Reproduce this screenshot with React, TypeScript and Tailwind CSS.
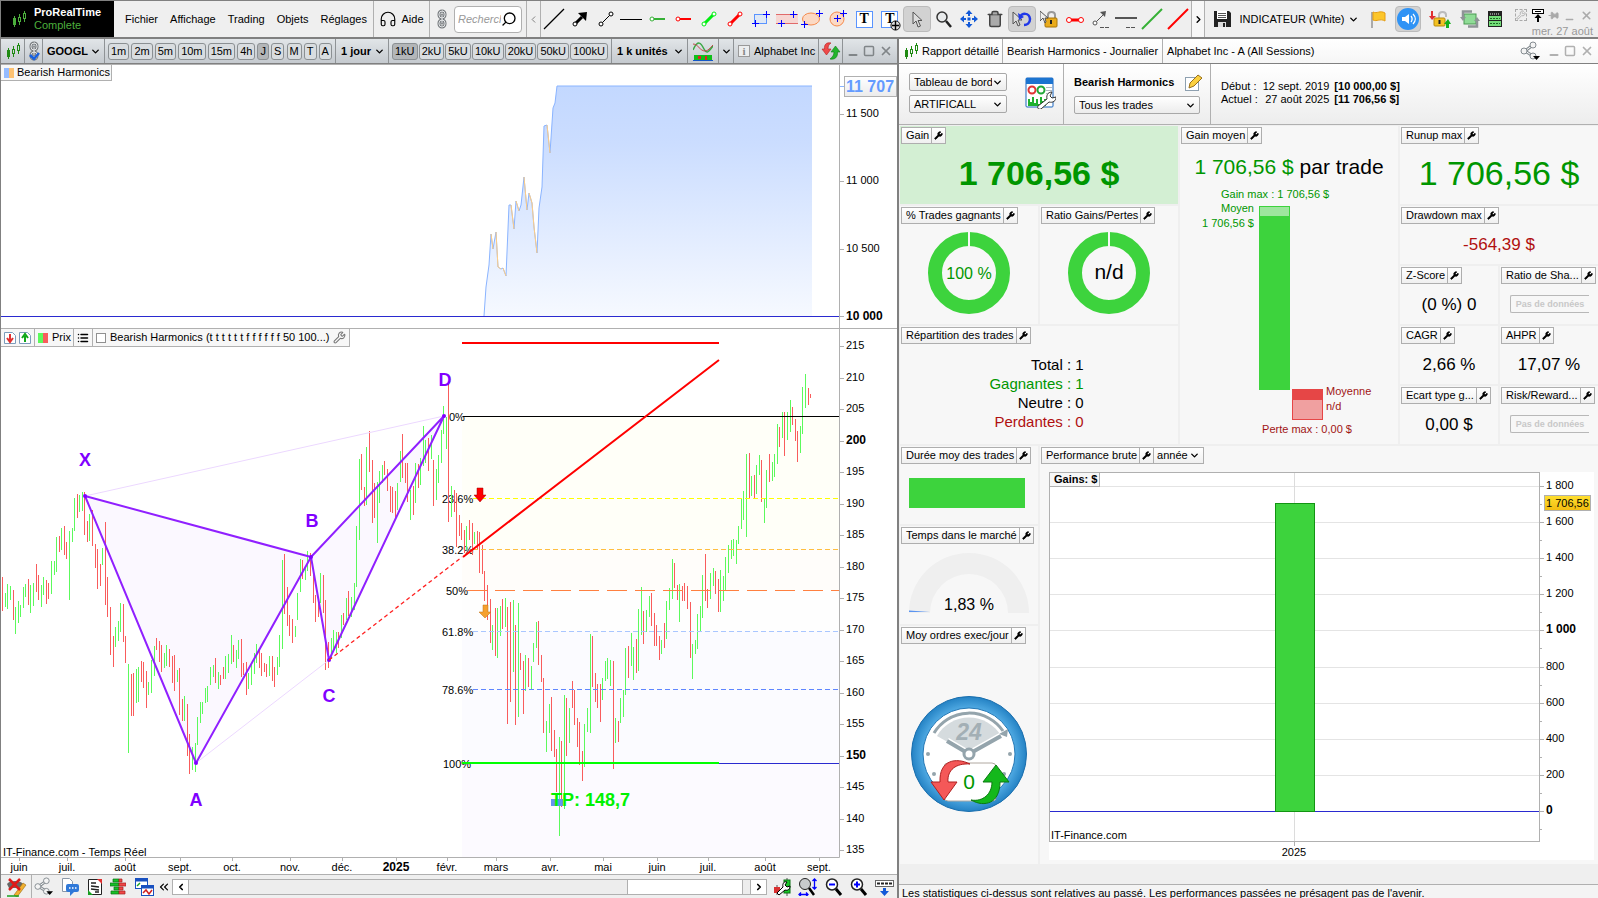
import React from 'react'
import {
  ChevronDown, ChevronLeft, ChevronRight, ChevronsLeft, Headphones, List, Minus, Pin, Search, Square, Trash2, Wrench, X,
} from 'lucide-react'

// x,high,low of each session, split by direction
const risingBars = `5,593,607 7,584,609 10,586,600 15,607,634 18,601,623 20,605,617 23,587,608 25,584,597 30,585,613 33,583,606
41,585,607 43,577,595 51,561,594 54,561,575 56,537,572 61,528,550 69,531,600 72,528,542 74,498,531 79,495,512 82,492,511 89,514,541
102,548,565 115,627,647 118,621,641 120,603,632 128,664,753 136,669,703 138,667,702 148,682,695 151,660,693 154,646,676 164,653,668
166,645,666 177,670,682 184,696,721 192,747,770 195,743,772 197,717,745 200,702,723 202,702,714 205,688,703 207,686,702 210,667,685
213,665,677 218,672,689 225,656,679 228,654,673 231,635,664 236,650,668 238,640,659 248,673,689 251,663,685 254,653,674 256,644,663
269,656,676 277,657,675 279,635,667 282,560,649 295,626,637 297,593,620 300,559,592 305,567,580 307,551,571 320,573,603 331,638,659
333,630,650 336,632,653 341,615,638 346,598,620 351,597,617 354,583,610 356,526,587 359,459,540 366,447,505 377,482,543 379,471,503
382,465,483 397,483,510 400,451,482 410,490,520 415,463,503 420,458,485 423,426,466 425,440,463 431,435,459 436,469,500 438,455,483
441,430,463 443,406,434 446,417,449 451,486,517 466,526,550 474,532,544 492,625,650 497,608,658 500,606,636 505,598,627 513,600,672
518,603,717 525,655,691 531,666,690 533,643,662 536,622,648 546,721,752 549,704,733 559,737,836 564,695,809 569,708,743 584,724,767
587,708,732 590,634,733 602,678,700 605,661,681 607,658,679 610,660,686 615,718,743 620,698,723 623,690,717 625,648,695 631,633,666
633,647,680 638,609,671 641,587,635 646,610,632 649,596,617 661,640,654 666,601,639 669,588,610 672,559,599 679,584,622 692,644,679
695,640,654 697,614,649 700,606,631 702,575,618 710,573,599 713,568,586 720,570,612 723,576,601 725,557,591 728,545,573 731,540,559
733,539,556 736,540,564 738,526,544 741,499,529 743,491,520 746,454,537 751,476,496 756,465,494 759,455,475 764,498,523 766,470,508
772,462,481 774,454,477 777,424,464 782,412,438 787,412,440 790,400,432 800,426,453 802,387,434 805,374,408`

const fallingBars = `2,577,611 13,590,620 28,579,605 36,564,592 38,575,600 46,580,604 48,583,599 59,536,552 64,526,555 66,542,559 77,494,518
84,492,535 87,521,542 92,510,546 95,544,568 97,549,589 100,564,586 105,522,605 107,577,617 110,607,655 113,636,667 123,604,642
125,636,663 131,674,716 133,673,716 141,661,682 143,662,688 146,671,708 156,638,650 159,641,662 161,645,672 169,649,667 172,656,683
174,655,691 179,668,715 182,699,721 187,704,756 189,734,774 215,658,683 220,675,685 223,667,679 233,645,662 241,639,677 243,663,675
246,662,695 259,650,668 261,653,676 264,663,672 266,664,677 272,656,681 274,667,687 284,554,614 287,587,626 289,615,636 292,619,643
302,560,579 310,553,576 313,570,603 315,595,622 318,600,617 323,575,613 325,600,670 328,642,668 338,632,648 343,613,625 348,591,616
361,454,490 364,487,506 369,431,472 372,460,523 374,483,518 384,461,475 387,469,491 390,486,512 392,487,513 395,491,520 402,434,478
405,463,483 407,463,502 413,486,515 418,464,488 428,438,471 433,460,506 448,382,522 454,490,512 456,493,547 459,515,536 461,523,540
464,530,553 469,520,540 472,523,555 477,531,550 479,532,573 482,545,574 484,571,601 487,585,620 490,599,643 495,608,656 502,599,629
507,607,724 510,602,702 515,625,725 520,653,670 523,661,714 528,658,687 538,621,665 541,655,682 543,678,733 551,697,751 554,730,757
556,749,792 561,741,807 566,698,756 572,681,708 574,690,725 577,718,747 579,722,765 582,751,781 592,636,687 595,673,702 597,684,708
600,684,722 613,661,769 618,721,742 628,646,678 636,639,673 643,611,644 651,593,626 654,613,646 656,625,646 659,636,660 664,623,648
674,563,588 677,585,600 682,586,601 684,583,601 687,586,609 690,602,658 705,554,601 707,589,608 715,571,594 718,579,612 749,453,498
754,475,499 761,460,502 769,454,482 779,427,447 784,412,456 792,407,425 795,419,441 797,431,462 808,388,405 810,394,398`

const toPath = (bars: string) =>
  bars
    .split(/\s+/)
    .map((bar) => bar.split(','))
    .map(([x, high, low]) => `M${Number(x) + 0.5} ${high}V${low}`)
    .join('')

const equity = [
  [484, 316], [486, 287], [489, 265], [491, 234], [493, 249], [496, 232], [498, 267], [501, 269], [503, 268], [506, 276],
  [509, 205], [511, 205], [514, 229], [516, 201], [519, 211], [521, 205], [524, 177], [527, 210], [529, 193], [532, 203],
  [534, 227], [537, 253], [539, 208], [542, 187], [544, 126], [547, 125], [550, 153], [553, 108], [555, 103], [557, 86], [812, 86],
]

const prices = [215, 210, 205, 200, 195, 190, 185, 180, 175, 170, 165, 160, 155, 150, 145, 140, 135]

const months: [string, number][] = [
  ['juin', 19], ['juil.', 67], ['août', 125], ['sept.', 180], ['oct.', 232], ['nov.', 290], ['déc.', 342], ['2025', 396],
  ['févr.', 447], ['mars', 496], ['avr.', 550], ['mai', 603], ['juin', 657], ['juil.', 708], ['août', 765], ['sept.', 819],
]

const fibLevels = [
  { label: '0%', x: 449, y: 416, from: 463, color: '#000000', dash: '' },
  { label: '23.6%', x: 442, y: 498, from: 473, color: '#ffff00', dash: '5 3' },
  { label: '38.2%', x: 442, y: 549, from: 473, color: '#ffbf40', dash: '5 3' },
  { label: '50%', x: 446, y: 590, from: 467, color: '#ff8040', dash: '20 8' },
  { label: '61.8%', x: 442, y: 631, from: 473, color: '#a9c6ff', dash: '5 3' },
  { label: '78.6%', x: 442, y: 689, from: 473, color: '#5f86ff', dash: '5 3' },
  { label: '100%', x: 443, y: 763, from: 463, color: '#2a2ad0', dash: '' },
]

const patternLabels: [string, number, number][] = [
  ['X', 85, 466], ['A', 196, 806], ['B', 312, 527], ['C', 329, 702], ['D', 445, 386],
]

function Icon({ w = 18, h = 18, children }: { w?: number; h?: number; children: React.ReactNode }) {
  return (
    <svg width={w} height={h} viewBox={`0 0 ${w} ${h}`} fill="none" className="shrink-0" aria-hidden="true">
      {children}
    </svg>
  )
}

function CandlesIcon({ color = '#1f8a12' }: { color?: string }) {
  return (
    <Icon w={14} h={16}>
      <path d="M2.500 5v11M7.500 3v3M7.500 11v3M12.500 0v2M12.500 8v3" stroke={color} />
      <rect x="1" y="7" width="3" height="7" fill={color} />
      <rect x="6.500" y="6.500" width="2" height="4" stroke={color} />
      <rect x="11.500" y="2.500" width="2" height="5" stroke={color} />
    </Icon>
  )
}

function ChainIcon({ checked }: { checked?: boolean }) {
  return (
    <Icon w={12} h={20}>
      <g strokeLinecap="round" stroke="#777b7e" strokeWidth="3">
        <rect x="3" y="2" width="6" height="7" rx="3" />
        <rect x="3" y="11" width="6" height="7" rx="3" />
        <path d="M6 6v8" />
      </g>
      <g strokeLinecap="round" stroke="#e4e6e8" strokeWidth="1">
        <rect x="3" y="2" width="6" height="7" rx="3" />
        <rect x="3" y="11" width="6" height="7" rx="3" />
        <path d="M6 6v8" />
      </g>
      {checked && <path d="M2 14l4 4 5-6" stroke="#1860e0" strokeWidth="2.500" />}
    </Icon>
  )
}

function SwapIcon() {
  return (
    <Icon w={20} h={18}>
      <path d="M10 1C5 0 3 3 3.500 7H1l4.500 6L10 7H7c0-3 1-5 3-6z" fill="#ee4a4a" stroke="#b31e1e" strokeWidth=".6" />
      <path d="M9 17c5 1 8-2 7.500-7H19l-4.500-6L10 10h3c0 3-1.500 5-4 7z" fill="#22b52c" stroke="#0d7a14" strokeWidth=".6" />
    </Icon>
  )
}

function ShareIcon({ size = 20 }: { size?: number }) {
  return (
    <svg width={size} height={size} viewBox="0 0 20 20" fill="none" className="shrink-0" aria-hidden="true">
      <path d="M5 10l8-6M5 10l8 5" stroke="#858c91" strokeWidth="3" />
      <path d="M5 10l8-6M5 10l8 5" stroke="#fff" />
      <circle cx="4" cy="10" r="3" fill="#f4f4f4" stroke="#858c91" />
      <circle cx="13" cy="4" r="3" fill="#f4f4f4" stroke="#858c91" />
      <circle cx="13" cy="15" r="3" fill="#f4f4f4" stroke="#858c91" />
      <path d="M13 15h7l-3.500 4z" fill="#000" />
    </svg>
  )
}

function Segment({ color, thick }: { color: string; thick?: boolean }) {
  return (
    <Icon w={16} h={16}>
      <path d="M3 13L13 3" stroke={color} strokeWidth={thick ? 3 : 1} />
      <circle cx="3" cy="13" r="2" fill="#fff" stroke={color} />
      <circle cx="13" cy="3" r="2" fill="#fff" stroke={color} />
    </Icon>
  )
}

const plus = (x: number, y: number) => `M${x - 3} ${y + 0.5}h7M${x + 0.5} ${y - 3}v7`

const drawingTools: { name: string; active?: boolean; icon: React.ReactNode }[] = [
  { name: 'Droite', icon: <Icon w={22} h={22}><path d="M1 21L21 1" stroke="#000" strokeWidth="1.300" /></Icon> },
  { name: 'Flèche', icon: <Icon w={16} h={16}><path d="M3 13l7-7" stroke="#000" strokeWidth="3" /><path d="M6 2l9-1-1 9z" fill="#000" /><circle cx="3" cy="13" r="2" fill="#fff" stroke="#000" /></Icon> },
  { name: 'Segment', icon: <Segment color="#000" /> },
  { name: 'Horizontale', icon: <Icon w={22}><path d="M0 9.500h22" stroke="#000" /></Icon> },
  { name: 'Demi-droite haussière', icon: <Icon w={16}><path d="M4 9h12" stroke="#35b035" strokeWidth="2" /><circle cx="3" cy="9" r="2" fill="#fff" stroke="#35b035" /></Icon> },
  { name: 'Demi-droite baissière', icon: <Icon w={16}><path d="M4 9h12" stroke="#f00" strokeWidth="2" /><circle cx="3" cy="9" r="2" fill="#fff" stroke="#f00" /></Icon> },
  { name: 'Segment haussier', icon: <Segment color="#0e1" thick /> },
  { name: 'Segment baissier', icon: <Segment color="#f00" thick /> },
  { name: 'Rectangle', icon: <Icon><rect x="2.500" y="4.500" width="12" height="9" fill="#dfe8f5" stroke="#5a94ff" /><path d={plus(14, 4) + plus(3, 13)} stroke="#00f" /></Icon> },
  { name: 'Canal', icon: <Icon w={22}><rect y="4" width="22" height="10" fill="#f6d6d2" /><path d="M0 4.500h22M0 13.500h22" stroke="#e06a6a" /><path d={plus(17, 4) + plus(5, 13)} stroke="#00f" /></Icon> },
  { name: 'Ellipse', icon: <Icon w={22}><ellipse cx="10" cy="9" rx="8.500" ry="6" fill="#fbd9c4" stroke="#f58a4c" /><path d={plus(18, 3) + plus(3, 14)} stroke="#00f" /></Icon> },
  { name: 'Cercle', icon: <Icon><circle cx="8" cy="9" r="7" fill="#fbd9c4" stroke="#f58a4c" /><path d={plus(8, 8) + plus(14, 3)} stroke="#00f" /></Icon> },
  { name: 'Texte', icon: <span className="flex h-[17px] w-[17px] items-center justify-center border border-[#5a94ff] bg-white font-['Liberation_Serif',serif] text-sm font-bold">T</span> },
  { name: 'Texte ancré', icon: <span className="relative flex h-[17px] w-[17px] items-center justify-center border border-[#5a94ff] bg-white font-['Liberation_Serif',serif] text-sm font-bold">T<svg viewBox="0 0 12 12" className="absolute -right-1 -bottom-1 h-[11px] w-[11px]"><circle cx="6" cy="6" r="5" fill="#ddd" stroke="#000" /><path d="M6 1v10M2 6h8" stroke="#000" strokeWidth="1.500" /></svg></span> },
  { name: 'Sélection', active: true, icon: <Icon w={12} h={18}><path d="M2 2v12l3-3 2 6 2.500-1-2.500-5.500h4z" fill="#ddd" stroke="#555" /></Icon> },
  { name: 'Loupe', icon: <Icon><circle cx="7" cy="7" r="5" fill="#e8eaeb" stroke="#333" strokeWidth="1.500" /><path d="M11 11l5 6" stroke="#222" strokeWidth="2.500" /></Icon> },
  { name: 'Déplacer', icon: <Icon><path d="M9 0l3.500 4h-7zM9 18l3.500-4h-7zM0 9l4-3.500v7zM18 9l-4-3.500v7z" fill="#1259d8" /><path d="M9 3v3M9 12v3M3 9h3M12 9h3" stroke="#1259d8" strokeWidth="2" /><rect x="7.500" y="7.500" width="3" height="3" fill="#1259d8" /></Icon> },
  { name: 'Supprimer', icon: <Trash2 size={18} fill="#aaa" stroke="#444" strokeWidth={2} /> },
  { name: 'Annuler', active: true, icon: <Icon w={20}><path d="M1 2v12l3-3 2 5 2-1-2-5h4z" fill="#ddd" stroke="#555" /><path d="M8 7c2-4 9-5 10 2 0 4-3 6-6 6" stroke="#2038e8" strokeWidth="2.500" /><path d="M6 3l1 7 5-3z" fill="#2038e8" /></Icon> },
  { name: 'Verrouiller', icon: <Icon><path d="M8 9V5c0-4 7-4 7 0v4" stroke="#999" strokeWidth="2" /><rect x="5" y="8" width="12" height="9" rx="1" fill="#e9ab1b" stroke="#a87408" /><path d="M11 10v4" stroke="#222" strokeWidth="2" /><path d="M0 1v10l3-3 2 5 1-1-1-4h3z" fill="#eee" stroke="#555" /></Icon> },
  { name: 'Segment horizontal', icon: <Icon><path d="M3 10h12" stroke="#f00" strokeWidth="3" /><circle cx="3" cy="10" r="2.500" fill="#fff" stroke="#f00" /><circle cx="15" cy="10" r="2.500" fill="#fff" stroke="#f00" /></Icon> },
  { name: 'Flèche pointillée', icon: <Icon h={20}><path d="M3 14L12 5" stroke="#555" /><path d="M8 3l6-1-1 6z" fill="#555" /><circle cx="3" cy="14" r="2" fill="#fff" stroke="#555" /><path d="M8 18.500h9" stroke="#555" strokeDasharray="4 1" /></Icon> },
  { name: 'Niveau', icon: <Icon w={22} h={20}><path d="M0 9h22" stroke="#555" strokeWidth="2" /><path d="M11 18.500h9" stroke="#555" strokeDasharray="4 1" /></Icon> },
  { name: 'Support', icon: <Icon w={22} h={22}><path d="M1 21L21 1" stroke="#35b035" strokeWidth="2" /></Icon> },
  { name: 'Résistance', icon: <Icon w={22} h={22}><path d="M1 21L21 1" stroke="#f00" strokeWidth="2" /></Icon> },
]

function Dropdown({ label, value, className = '' }: { label: string; value: string; className?: string }) {
  return (
    <span className={`relative inline-flex items-center ${className}`}>
      <select aria-label={label} className="w-full appearance-none bg-transparent pr-[14px] outline-none">
        <option>{value}</option>
      </select>
      <ChevronDown size={11} strokeWidth={3} className="pointer-events-none absolute right-[3px]" />
    </span>
  )
}

function WindowControls({ color }: { color: string }) {
  return (
    <div className={`flex items-center gap-1 ${color}`}>
      <button aria-label="Réduire" className="pt-2"><Minus size={12} strokeWidth={4} /></button>
      <button aria-label="Agrandir"><Square size={12} strokeWidth={3} /></button>
      <button aria-label="Fermer"><X size={14} strokeWidth={3} /></button>
    </div>
  )
}

function TopBar() {
  return (
    <header className="flex h-[39px] items-stretch border-t border-b-2 border-[#808080] bg-[#efefef]">
      <div className="flex w-[114px] shrink-0 items-center gap-2 border-l border-[#808080] bg-black pl-[11px]">
        <CandlesIcon color="#4caf3c" />
        <div className="leading-[13px]">
          <div className="font-bold text-white">ProRealTime</div>
          <div className="text-[#4caf3c]">Complete</div>
        </div>
      </div>
      <nav className="flex w-[260px] shrink-0 items-center justify-between border-r border-[#b0b0b0] pr-[6px] pl-[11px]">
        {['Fichier', 'Affichage', 'Trading', 'Objets', 'Réglages'].map((item) => (
          <button key={item}>{item}</button>
        ))}
      </nav>
      <button className="flex w-[56px] shrink-0 items-center justify-center gap-1 border-r border-[#b0b0b0]">
        <Headphones size={18} strokeWidth={1.5} />
        Aide
      </button>
      <div className="flex w-[97px] shrink-0 items-center justify-between border-r border-[#b0b0b0] pr-1 pl-[6px]">
        <button aria-label="Lier"><ChainIcon /></button>
        <label className="flex h-[27px] w-[68px] items-center rounded-sm border border-[#b0b0b0] bg-white pr-1 pl-[3px]">
          <input aria-label="Rechercher" placeholder="Rechercher" className="w-0 flex-1 italic outline-none placeholder:text-[#999]" />
          <Search size={16} className="-scale-x-100" strokeWidth={2} />
        </label>
      </div>
      <button aria-label="Précédent" className="flex w-[14px] shrink-0 items-center justify-center border-r border-[#b0b0b0] text-[#777]">
        <ChevronLeft size={11} />
      </button>
      <div className="flex min-w-0 flex-1 items-center">
        {drawingTools.map((tool) => (
          <button
            key={tool.name}
            aria-label={tool.name}
            className={`flex h-[26px] flex-1 items-center justify-center ${tool.active ? 'rounded-sm border border-[#bbb] bg-[#d2d2d2]' : ''}`}
          >
            {tool.icon}
          </button>
        ))}
      </div>
      <button aria-label="Suivant" className="flex w-[14px] shrink-0 items-center justify-center border-x border-[#b0b0b0] bg-[#f7f7f7]">
        <ChevronRight size={11} strokeWidth={3} />
      </button>
      <div className="flex w-[393px] shrink-0 items-center justify-between pr-[5px] pl-[9px]">
        <button aria-label="Enregistrer">
          <Icon w={17}><path d="M0 1h15l2 2v14H0z" fill="#222" /><rect x="3" y="1" width="10" height="8" fill="#fff" /><path d="M4 3.500h8M4 5.500h8M4 7.500h8" stroke="#555" /><rect x="4" y="12" width="8" height="5" fill="#ddd" /><rect x="9" y="13" width="2" height="4" fill="#222" /></Icon>
        </button>
        <Dropdown label="Espace de travail" value="INDICATEUR (White)" className="w-[122px]" />
        <button aria-label="Drapeau">
          <Icon w={16}><path d="M2 2v16" stroke="#aaa" strokeWidth="2" /><path d="M3 2c4 2 7-2 12 1v8c-5-3-8 1-12-1z" fill="#fcc62a" stroke="#e59d13" /></Icon>
        </button>
        <button aria-label="Son" className="flex h-[26px] w-[26px] items-center justify-center rounded-sm border border-[#bbb] bg-[#d2d2d2]">
          <Icon w={22} h={22}><circle cx="11" cy="11" r="11" fill="#2f93f5" /><path d="M5 9h3l4-3v10l-4-3H5z" fill="#fff" /><path d="M14 8c1.500 2 1.500 4 0 6M16 6c3 3 3 7 0 10" stroke="#fff" strokeWidth="1.300" /></Icon>
        </button>
        <button aria-label="Verrou du trading">
          <Icon w={22}><path d="M10 8V5c0-4 7-4 7 0v2" stroke="#bbb" strokeWidth="2" /><rect x="5" y="8" width="11" height="8" rx="1" fill="#f3c122" stroke="#b98b0c" /><path d="M10.500 10v4" stroke="#222" strokeWidth="2" /><path d="M2 1h2v5h3L3 10 0 6h2z" fill="#e03030" /><path d="M17 18v-4h-2l4-5 3 5h-2v4z" fill="#16b01c" /></Icon>
        </button>
        <button aria-label="Actualiser">
          <Icon w={20}><rect x="4" y="4" width="12" height="10" fill="#8fdc96" stroke="#4a9a52" /><path d="M12 1.500H3V7M8 16.500h9V11" stroke="#8e9496" strokeWidth="2.500" /><path d="M0 7h6l-3 4zM14 11h6l-3-4z" fill="#8e9496" /></Icon>
        </button>
        <button aria-label="Serveur">
          <Icon w={14} h={16}><rect width="14" height="16" fill="#222" /><rect x="1" y="5" width="12" height="4" fill="#73dc78" /><rect x="1" y="10" width="12" height="5" fill="#73dc78" /><path d="M2 3h10" stroke="#eee" strokeDasharray="1 1" /><path d="M2 7.500h10M2 12.500h10" stroke="#1c6a22" strokeDasharray="2 1" /></Icon>
        </button>
        <div className="flex w-[82px] flex-col items-end pt-1">
          <div className="flex w-full items-center justify-between pl-1 text-[#aaa]">
            <button aria-label="Configurer" className="border border-dashed border-[#aaa]"><Wrench size={10} /></button>
            <button aria-label="Ancrer" className="text-black">
              <Icon w={12} h={13}><rect x=".5" y=".5" width="11" height="4" fill="#fff" stroke="#000" /><path d="M3 2.500h6" stroke="#000" /><path d="M6 5l3.500 4h-7z" fill="#000" /><path d="M6 8v5" stroke="#000" strokeWidth="2" /></Icon>
            </button>
            <button aria-label="Épingler"><Pin size={11} fill="#aaa" className="rotate-90" /></button>
            <button aria-label="Réduire" className="pt-2"><Minus size={11} strokeWidth={3} /></button>
            <button aria-label="Fermer"><X size={13} strokeWidth={3} /></button>
          </div>
          <div className="leading-3 whitespace-nowrap text-[#999]">mer. 27 août</div>
        </div>
      </div>
    </header>
  )
}

function ChipButton({ text, active }: { text: string; active?: boolean }) {
  return (
    <button className={`h-[17px] rounded-[3px] border border-[#8b9093] px-[2px] leading-[15px] ${active ? 'bg-[#b3b6b8]' : 'bg-[#d9dde0]'}`}>
      {text}
    </button>
  )
}

function ChartTitleBar() {
  const cell = 'flex shrink-0 items-center border-r border-[#8f9396]'
  return (
    <div className="flex h-[25px] items-stretch border-b border-[#808080] bg-linear-to-b from-[#e1e5e8] to-[#c5cacf]">
      <div className={`${cell} w-[24px] justify-center`}><CandlesIcon /></div>
      <button aria-label="Lier la liste" className={`${cell} w-[18px] justify-center`}><ChainIcon checked /></button>
      <div className={`${cell} w-[62px] pl-1 font-bold`}><Dropdown label="Instrument" value="GOOGL" className="w-full" /></div>
      <div className={`${cell} w-[231px] justify-between px-[3px]`}>
        {['1m', '2m', '5m', '10m', '15m', '4h', 'J', 'S', 'M', 'T', 'A'].map((unit) => (
          <ChipButton key={unit} text={unit} active={unit === 'J'} />
        ))}
      </div>
      <div className={`${cell} w-[53px] pl-[5px] font-bold`}><Dropdown label="Unité de temps" value="1 jour" className="w-full" /></div>
      <div className={`${cell} w-[223px] justify-between px-[3px]`}>
        {['1kU', '2kU', '5kU', '10kU', '20kU', '50kU', '100kU'].map((unit) => (
          <ChipButton key={unit} text={unit} active={unit === '1kU'} />
        ))}
      </div>
      <div className={`${cell} w-[76px] pl-[5px] font-bold`}><Dropdown label="Historique" value="1 k unités" className="w-full" /></div>
      <button aria-label="Indicateurs" className={`${cell} w-[31px] justify-center`}>
        <Icon w={20} h={20}><path d="M0 9C5-2 8 2 11 8s5 2 9-3" stroke="#3aa845" strokeWidth="1.500" /><path d="M0 3c5 0 7 7 12 7 3 0 5-3 8-6" stroke="#c04848" /><path d="M1 20v-6h18v6z" fill="#0fbf1a" /><path d="M5 15h3v3H5zM12 15h2v4h-2z" fill="#e12222" /><path d="M0 19.500h20" stroke="#1558c8" /></Icon>
      </button>
      <button aria-label="Plus d'indicateurs" className={`${cell} w-[15px] justify-center`}><ChevronDown size={11} strokeWidth={3} /></button>
      <div className="flex min-w-0 flex-1 items-center gap-1 overflow-hidden border-r border-[#8f9396] pl-1">
        <button aria-label="Informations" className="h-3 w-3 shrink-0 border border-[#999] bg-[#eceeef] font-['Liberation_Serif',serif] leading-[10px] font-bold text-[#888]">i</button>
        <span className="whitespace-nowrap">Alphabet Inc</span>
      </div>
      <button aria-label="Temps réel" className={`${cell} w-[24px] justify-center`}><SwapIcon /></button>
      <div className="flex w-[54px] shrink-0 items-center justify-center"><WindowControls color="text-[#808588]" /></div>
    </div>
  )
}

function EquityChart() {
  const line = equity.map(([x, y]) => `${x} ${y}`).join('L')
  const drops = equity
    .slice(1)
    .map(([x, y], i) => (y > equity[i][1] ? `M${equity[i][0]} ${equity[i][1]}L${x} ${y}` : ''))
    .join('')
  return (
    <div className="relative">
      <svg viewBox="1 64 896 265" className="block w-full bg-white text-[11px]">
        <defs>
          <linearGradient id="equityFill" x1="0" y1="0" x2="0" y2="1">
            <stop offset="0" stopColor="#c3d8ff" />
            <stop offset=".25" stopColor="#cbddff" />
            <stop offset="1" stopColor="#f6f9ff" />
          </linearGradient>
          <linearGradient id="priceTag" x1="0" y1="0" x2="0" y2="1">
            <stop offset="0" stopColor="#fff" />
            <stop offset="1" stopColor="#ebebeb" />
          </linearGradient>
        </defs>
        <path d={`M${line}V316H484z`} fill="url(#equityFill)" />
        <path d={`M${line}`} fill="none" stroke="#8ab4ff" />
        <path d={drops} fill="none" stroke="#ffcd84" />
        <path d="M0 316.500H839" stroke="#2a2ad0" />
        <path d="M839.500 64V329M840 114.500h4M840 181.500h4M840 249.500h4M840 316.500h4M0 328.500H897M0 64.500H897" stroke="#b0b0b0" />
        <path d="M840 86.500h4" stroke="#8ab4ff" />
        <rect x="844.500" y="76.500" width="52" height="20" fill="url(#priceTag)" stroke="#b0b0b0" />
        <text x="846" y="92" fontSize="16" fontWeight="bold" fill="#649bff">11 707</text>
        <text x="846" y="117">11 500</text>
        <text x="846" y="184">11 000</text>
        <text x="846" y="252">10 500</text>
        <text x="846" y="320" fontSize="12" fontWeight="bold">10 000</text>
      </svg>
      <div className="absolute top-px left-0 flex h-4 items-center border-r border-b border-[#b0b0b0] bg-[#f7f7f7] pr-px pl-[3px]">
        <span className="h-[10px] w-[5px] bg-[#94bbff]" />
        <span className="mr-[3px] h-[10px] w-[5px] bg-[#fdc273]" />
        Bearish Harmonics
      </div>
    </div>
  )
}

function PriceChart() {
  return (
    <div className="relative">
      <svg viewBox="1 329 896 546" className="block w-full bg-white text-[11px]">
        <path d="M462 416H839V549H462z" fill="#fffff8" />
        <path d="M462 549H839V590H462z" fill="#fffdfa" />
        <path d="M462 590H839V631H462z" fill="#fefefe" />
        <path d="M462 631H839V763H462z" fill="#fbfbff" />
        <path d="M462 763H839V857H462z" fill="#fcfaff" />
        <path d="M85 496L196 763L311 557zM311 557L329 660L444 416z" fill="#fbf8ff" />
        {fibLevels.map((level) => (
          <text key={level.label} x={level.x} y={level.y + 5}>{level.label}</text>
        ))}
        <path d={toPath(risingBars)} stroke="#5cfa5c" />
        <path d={toPath(fallingBars)} stroke="#f95c5c" />
        {fibLevels.map((level) => (
          <path key={level.label} d={`M${level.from} ${level.y + 0.5}H839`} stroke={level.color} strokeDasharray={level.dash} />
        ))}
        <path d="M85 496L444 416M196 763L329 660" stroke="#ecd8ff" />
        <path d="M85 496L196 763L311 557zM311 557L329 660L444 416z" fill="none" stroke="#9020ff" strokeWidth="2" strokeLinejoin="round" />
        {[[85, 496], [196, 763], [311, 557], [329, 660], [444, 416]].map(([x, y]) => (
          <circle key={x} cx={x} cy={y} r="2" fill="#8000ff" />
        ))}
        <path d="M329 660L462 557" stroke="#ff2020" strokeWidth="1.300" strokeDasharray="4 3" />
        <path d="M462 343H719M463 557L719 360" stroke="#ff0000" strokeWidth="2" />
        <path d="M462 763H719" stroke="#00ff00" strokeWidth="2" />
        <path d="M477 488h6v7h3l-6 7-6-7h3z" fill="#ff0000" stroke="#a00000" strokeWidth=".5" />
        <path d="M483 605h5v7h3l-6 6-6-6h4z" fill="#f5a030" stroke="#c07010" strokeWidth=".5" />
        <rect x="551" y="799" width="12" height="7" fill="#6495ed" />
        <text x="551" y="806" fontSize="18" fontWeight="bold" fill="#00f200">TP: 148,7</text>
        {patternLabels.map(([name, x, y]) => (
          <text key={name} x={x} y={y} fontSize="18" fontWeight="bold" textAnchor="middle" fill="#8000ff">{name}</text>
        ))}
        <path d="M0 857.500H839.500V329M0 874.500H897" fill="none" stroke="#b0b0b0" />
        {prices.map((price, i) => {
          const y = Math.round(346 + i * 31.5)
          const round = price % 50 === 0
          return (
            <g key={price}>
              <path d={`M840 ${y + 0.5}h4`} stroke="#b0b0b0" />
              <text x="846" y={y + 3} fontSize={round ? 12 : 11} fontWeight={round ? 'bold' : 'normal'}>{price}</text>
            </g>
          )
        })}
        {months.map(([month, x]) => (
          <g key={x}>
            <path d={`M${x + 0.5} 858v3`} stroke="#b0b0b0" />
            <text x={x} y="871" textAnchor="middle" fontSize={month === '2025' ? 12 : 11} fontWeight={month === '2025' ? 'bold' : 'normal'}>{month}</text>
          </g>
        ))}
        <text x="3" y="856">IT-Finance.com - Temps Réel</text>
      </svg>
      <div className="absolute top-0 left-0 flex h-[18px] items-stretch border-r border-b border-[#b0b0b0] bg-[#f7f7f7]">
        <div className="flex items-center gap-[3px] border-r border-[#b0b0b0] px-[3px]">
          <button aria-label="Descendre le graphique"><Icon w={12} h={12}><path d="M.5 .5h8l3 3v8H.5z" fill="#fff" stroke="#7c9cbc" /><path d="M6 2v7M3 6l3 4 3-4" stroke="#e03030" strokeWidth="2" /></Icon></button>
          <button aria-label="Monter le graphique"><Icon w={12} h={12}><path d="M.5 .5h8l3 3v8H.5z" fill="#fff" stroke="#7c9cbc" /><path d="M6 10V4M3 6l3-4 3 4" stroke="#10a818" strokeWidth="2" /></Icon></button>
        </div>
        <div className="flex items-center border-r border-[#b0b0b0] pr-0.5 pl-[3px]">
          <span className="h-[10px] w-[5px] bg-[#5cfa5c]" />
          <span className="mr-1 h-[10px] w-[5px] bg-[#f95c5c]" />
          Prix
        </div>
        <button aria-label="Liste des objets" className="border-r border-[#b0b0b0] px-[3px]"><List size={12} strokeWidth={3} /></button>
        <label className="flex items-center gap-1 px-[3px] whitespace-nowrap">
          <input type="checkbox" className="h-[10px] w-[10px] appearance-none border border-[#909090] bg-white" />
          Bearish Harmonics (t t t t t t f f f f f f 50 100...)
          <Wrench size={13} strokeWidth={2} className="text-[#777]" />
        </label>
      </div>
    </div>
  )
}

function BottomBar() {
  return (
    <div className="flex h-[23px] items-center bg-[#efefef]">
      <button aria-label="Masquer les objets" className="flex h-full w-[31px] items-center justify-center border-r border-[#b0b0b0]">
        <Icon w={22} h={20}><path d="M2 7C4 3 16 3 18 7l-2 4H4z" fill="#666" /><path d="M9 18l9-12 3 2-9 12z" fill="#f0b030" stroke="#9a6a10" strokeWidth=".6" /><path d="M4 2l11 11M15 2L4 13" stroke="#e01818" strokeWidth="2.500" /><path d="M2 19h12" stroke="#18a020" strokeWidth="1.500" /></Icon>
      </button>
      <div className="flex w-[122px] shrink-0 items-center justify-between pl-[2px]">
        <button aria-label="Partager"><ShareIcon size={19} /></button>
        <button aria-label="Commentaires">
          <Icon w={17}><path d="M.5 .5h7l3 3v10H.5z" fill="#fff" stroke="#8a98a8" /><rect x="4" y="6" width="13" height="8" rx="2" fill="#2f78d8" /><path d="M8 13v5l5-5z" fill="#2f78d8" /><path d="M7 10h8" stroke="#fff" strokeWidth="1.500" strokeDasharray="1.500 1.500" /></Icon>
        </button>
        <button aria-label="Rapport">
          <Icon w={14} h={16}><path d="M.5 .5h13v15H.5z" fill="#fff" stroke="#222" /><path d="M9 0h5v5z" fill="#e03030" /><path d="M0 11v5h5z" fill="#18a020" /><path d="M3 4h5M3 7l8 1M3 10l8 1M7 13h4" stroke="#222" strokeWidth="1.500" /></Icon>
        </button>
        <button aria-label="Carnet d'ordres">
          <Icon w={16} h={17}><path d="M3 1h6v3H3zM0 5h9v3H0zM4 9h5v3H4zM1 13h8v3H1z" fill="#18c028" stroke="#0a7012" strokeWidth=".7" /><path d="M9 1h3v3H9zM9 5h7v3H9zM9 9h4v3H9zM9 13h6v3H9z" fill="#f04848" stroke="#a02020" strokeWidth=".7" /></Icon>
        </button>
        <button aria-label="Fenêtres">
          <Icon w={19}><rect x=".5" y=".5" width="12" height="10" fill="#fff" stroke="#1850c0" /><path d="M0 2h13" stroke="#1850c0" strokeWidth="3" /><path d="M2 8l3-3" stroke="#18a020" strokeWidth="1.500" /><rect x="6.500" y="7.500" width="12" height="10" fill="#fff" stroke="#1850c0" /><path d="M6 9h13" stroke="#1850c0" strokeWidth="3" /><path d="M8 15l3-3 3 4 3-4" stroke="#d02020" strokeWidth="1.500" /></Icon>
        </button>
      </div>
      <button aria-label="Replier" className="ml-[2px] flex w-4 justify-center"><ChevronsLeft size={14} strokeWidth={2} /></button>
      <div className="flex h-4 min-w-0 flex-1 items-stretch border border-[#b0b0b0] bg-[#ededed]">
        <button aria-label="Défiler à gauche" className="flex w-4 items-center justify-center border-r border-[#b0b0b0] bg-white"><ChevronLeft size={10} strokeWidth={4} /></button>
        <div className="flex flex-1 justify-end pr-[7px]">
          <div className="w-[21%] border-x border-[#b0b0b0] bg-white" />
        </div>
        <button aria-label="Défiler à droite" className="flex w-4 items-center justify-center border-l border-[#b0b0b0] bg-white"><ChevronRight size={10} strokeWidth={4} /></button>
      </div>
      <div className="flex w-[130px] shrink-0 items-center justify-between pr-[3px] pl-[7px]">
        <button aria-label="Style du graphique">
          <Icon w={17}><path d="M3 7v10M13 0v18" stroke="#555" /><rect y="9" width="6" height="6" fill="#d83030" /><rect x="10" y="2" width="6" height="13" fill="#18c828" stroke="#0a7012" /><path d="M3 15l6-6c-1-4 2-6 4-5l-2 3 2 2 3-1c0 3-2 5-5 4l-6 5z" fill="#fff" stroke="#000" /></Icon>
        </button>
        <button aria-label="Zoom automatique">
          <Icon w={19}><circle cx="7" cy="6" r="5.500" fill="#c8cbcd" stroke="#222" /><path d="M11 10l5 7" stroke="#000" strokeWidth="2.500" /><path d="M16.500 1v10M2 16.500h8M14.500 3l2-2 2 2M14.500 9l2 2 2-2M3 14.500l-2 2 2 2M8 14.500l2 2-2 2" stroke="#00f" strokeWidth="1.300" /></Icon>
        </button>
        <button aria-label="Zoom arrière">
          <Icon><circle cx="7" cy="6.500" r="5.500" fill="#fff" stroke="#222" strokeWidth="1.500" /><path d="M11 11l5 6" stroke="#000" strokeWidth="3" /><path d="M4 6.500h6" stroke="#00f" strokeWidth="2" /></Icon>
        </button>
        <button aria-label="Zoom avant">
          <Icon><circle cx="7" cy="6.500" r="5.500" fill="#fff" stroke="#222" strokeWidth="1.500" /><path d="M11 11l5 6" stroke="#000" strokeWidth="3" /><path d="M4 6.500h6M7 3.500v6" stroke="#00f" strokeWidth="2" /></Icon>
        </button>
        <button aria-label="Afficher la barre">
          <Icon w={19}><rect x=".5" y="2.500" width="18" height="6" fill="#fff" stroke="#666" /><path d="M2 5.500h15" stroke="#222" strokeWidth="2" strokeDasharray="3 1" /><path d="M8 10h3v3h3l-4.500 5L5 13h3z" fill="#1259d8" /></Icon>
        </button>
      </div>
    </div>
  )
}

function TileLabel({ title, children }: { title: string; children?: React.ReactNode }) {
  return (
    <div className="flex">
      <div className="mt-px ml-px flex h-[17px] items-stretch border border-[#aeaeae] bg-linear-to-b from-white to-[#f0f0f0] whitespace-nowrap">
        <h3 className="pr-0.5 pl-1 leading-[15px]">{title}</h3>
        <button aria-label={`Configurer ${title}`} className="flex w-[14px] items-center justify-center border-l border-[#aeaeae]">
          <Wrench size={9} fill="currentColor" strokeWidth={2} />
        </button>
        {children}
      </div>
    </div>
  )
}

function Tile({ title, className = '', children }: { title: string; className?: string; children: React.ReactNode }) {
  return (
    <section className={`flex min-w-0 flex-col ${className || 'bg-[#f7f7f7]'}`}>
      <TileLabel title={title} />
      {children}
    </section>
  )
}

function Figure({ value, className = 'text-[17px]' }: { value: string; className?: string }) {
  return <p className={`flex flex-1 items-center justify-center leading-none whitespace-nowrap ${className}`}>{value}</p>
}

function NoData() {
  return (
    <div className="flex flex-1 items-center justify-center pr-[9px] pl-[10px]">
      <span className="h-[18px] w-full rounded-l-xs border border-r-0 border-[#b8b8b8] text-center text-[9px] leading-4 font-bold whitespace-nowrap text-[#c8c8c8]">Pas de données</span>
    </div>
  )
}

function Ring({ value, className }: { value: string; className: string }) {
  return (
    <div className="flex flex-1 items-center justify-center pb-0.5">
      <svg viewBox="0 0 82 82" className="h-[82px] w-[82px]">
        <circle cx="41" cy="41" r="34" fill="none" stroke="#3dd33d" strokeWidth="14" />
        <path d="M41 0v15" stroke="#f7f7f7" strokeWidth="2" />
        <text x="41" y="47" textAnchor="middle" className={className}>{value}</text>
      </svg>
    </div>
  )
}

const tradeCounts = [
  { label: 'Total', value: 1, color: 'text-black' },
  { label: 'Gagnantes', value: 1, color: 'text-[#009600]' },
  { label: 'Neutre', value: 0, color: 'text-black' },
  { label: 'Perdantes', value: 0, color: 'text-[#b01010]' },
]

function AverageChart() {
  return (
    <svg viewBox="1180 183 218 261" className="block w-full text-[11px]">
      <g fill="#009600">
        <text x="1221" y="198">Gain max : 1 706,56 $</text>
        <text x="1254" y="212" textAnchor="end">Moyen</text>
        <text x="1254" y="227" textAnchor="end">1 706,56 $</text>
      </g>
      <rect x="1259" y="206" width="31" height="184" fill="#3dd33d" />
      <rect x="1260" y="207" width="29" height="9" fill="#9ee69e" />
      <rect x="1292" y="389" width="31" height="31" fill="#e64646" />
      <rect x="1293" y="400" width="29" height="19" fill="#f0a0a0" />
      <g fill="#a01414">
        <text x="1326" y="395">Moyenne</text>
        <text x="1326" y="410">n/d</text>
        <text x="1307" y="433" textAnchor="middle">Perte max : 0,00 $</text>
      </g>
    </svg>
  )
}

function Clock() {
  return (
    <svg viewBox="0 0 116 116" className="mx-auto mt-[52px] block h-[116px] w-[116px]">
      <defs>
        <radialGradient id="clockRim" cx=".5" cy=".5" r=".5">
          <stop offset=".8" stopColor="#4fa9e2" />
          <stop offset="1" stopColor="#2482c4" />
        </radialGradient>
      </defs>
      <circle cx="58" cy="58" r="57.500" fill="url(#clockRim)" stroke="#1b6fae" />
      <circle cx="58" cy="58" r="46" fill="#fff" stroke="#2277b5" />
      <path d="M58 58L26 40A37 37 0 0 1 90 40z" fill="#d5dbde" />
      <path d="M23 37A41 41 0 0 1 92 35" fill="none" stroke="#94a4ac" strokeWidth="3" />
      <path d="M88 38l9-5-1 8z" fill="#94a4ac" />
      <text x="58" y="44" textAnchor="middle" fontSize="23" fontStyle="italic" fontWeight="bold" fill="#a3afb5">24</text>
      <path d="M36 45L58 58L90 40" fill="none" stroke="#fff" strokeWidth="7" />
      <path d="M36 45L58 58L90 40" fill="none" stroke="#94a4ac" strokeWidth="4" />
      <circle cx="58" cy="58" r="5" fill="#fff" stroke="#94a4ac" strokeWidth="3" />
      <g fill="#94a4ac">
        <circle cx="17" cy="58" r="2" />
        <circle cx="99" cy="58" r="2" />
        <circle cx="23" cy="78" r="2" />
        <circle cx="93" cy="78" r="2" />
      </g>
      <rect x="33" y="67" width="52" height="38" rx="4" fill="#fff" stroke="#b0a8a0" />
      <path d="M59 68C45 61 28 64 29 86h-9l13 18 13-18h-9c-1-12 8-19 22-18z" fill="#f45858" stroke="#b02020" />
      <path d="M60 104c14 8 29 3 29-18h9L85 69 72 86h9c0 12-9 20-21 18z" fill="#14b81c" stroke="#0a7a10" />
      <text x="58" y="93" textAnchor="middle" fontSize="21" fill="#009600">0</text>
    </svg>
  )
}

function PerformanceChart() {
  const marks = [1800, 1600, 1400, 1200, 1000, 800, 600, 400, 200, 0]
  return (
    <svg viewBox="1049 472 545 388" className="block w-full bg-white text-[11px]">
      <defs>
        <linearGradient id="gainTag" x1="0" y1="0" x2="0" y2="1">
          <stop offset="0" stopColor="#ffe030" />
          <stop offset="1" stopColor="#f2bc10" />
        </linearGradient>
      </defs>
      {marks.map((mark) => {
        const y = Math.round(811 - mark * 0.1806)
        const strong = mark % 1000 === 0
        return (
          <g key={mark}>
            <path d={`M1050 ${y + 0.5}H1539`} stroke="#e4e4e4" />
            <path d={`M1540 ${y + 0.5}h4M1540 ${y + 18.5}h2`} stroke="#b0b0b0" />
            <text x="1546" y={y + 3} fontSize={strong ? 12 : 11} fontWeight={strong ? 'bold' : 'normal'}>
              {mark >= 1000 ? `${Math.floor(mark / 1000)} ${String(mark % 1000).padStart(3, '0')}` : mark}
            </text>
          </g>
        )
      })}
      <path d="M1294.500 473V841" stroke="#dcdcdc" />
      <path d="M1049 811.500H1540" stroke="#2a2ad0" />
      <rect x="1275.500" y="503.500" width="39" height="308" fill="#3dd33d" stroke="#129412" />
      <rect x="1049.500" y="472.500" width="490" height="369" fill="none" stroke="#b0b0b0" />
      <rect x="1049.500" y="472.500" width="50" height="14" fill="#f7f7f7" stroke="#b0b0b0" />
      <text x="1054" y="483" fontWeight="bold">Gains: $</text>
      <rect x="1544.500" y="495.500" width="46" height="15" fill="url(#gainTag)" stroke="#b0b0b0" />
      <text x="1546" y="507">1 706,56</text>
      <text x="1051" y="839">IT-Finance.com</text>
      <path d="M1294.500 842v4" stroke="#b0b0b0" />
      <text x="1294" y="856" textAnchor="middle">2025</text>
    </svg>
  )
}

function Report() {
  const box = 'h-[18px] rounded-xs border border-[#a8a8a8] bg-linear-to-b from-white to-[#ececec] pl-1'
  return (
    <main className="flex min-w-0 flex-col bg-[#efefef]">
      <div className="flex h-[25px] items-stretch border-b border-[#808080] bg-linear-to-b from-white to-[#f6f6f6]">
        <h1 className="flex items-center gap-1 border-r border-[#b0b0b0] pr-[3px] pl-[5px]"><CandlesIcon />Rapport détaillé</h1>
        <h2 className="flex items-center border-r border-[#b0b0b0] px-1">Bearish Harmonics - Journalier</h2>
        <h2 className="flex items-center px-1">Alphabet Inc - A (All Sessions)</h2>
        <div className="ml-auto flex items-center gap-2 pr-1">
          <button aria-label="Partager le rapport"><ShareIcon /></button>
          <WindowControls color="text-[#b0b0b0]" />
        </div>
      </div>
      <div className="flex h-[61px] items-stretch border-b border-[#b0b0b0] bg-linear-to-b from-white to-[#ededed]">
        <div className="flex w-[165px] items-center justify-between border-r border-[#b0b0b0] pr-[7px] pb-0.5 pl-[10px]">
          <div className="flex w-[98px] flex-col gap-1">
            <Dropdown label="Vue" value="Tableau de bord" className={box} />
            <Dropdown label="Modèle" value="ARTIFICALL" className={box} />
          </div>
          <button aria-label="Configurer le tableau de bord">
            <Icon w={31} h={32}>
              <rect x="1" y="1" width="27" height="29" rx="1" fill="#fff" stroke="#1a66c0" />
              <path d="M1 1h27v6H1z" fill="#1c74d0" />
              <circle cx="7" cy="13" r="3.500" stroke="#e03434" strokeWidth="2" />
              <circle cx="16" cy="13" r="3.500" stroke="#20a838" strokeWidth="2" />
              <path d="M21 10.500h6M21 13.500h6M21 16.500h4" stroke="#b0b8c0" />
              <path d="M3 29v-7h2v3h2v-5h2v6h2v-4h2v5h2v-7h2v4h2v-2h2v7z" fill="#20b030" />
              <path d="M13 29l9-7c-1-5 2-7 5-7l-2 4 2 2 4-1c0 4-3 6-7 5l-8 7c-3 1-4-2-3-3z" fill="#fff" stroke="#333" />
            </Icon>
          </button>
        </div>
        <div className="flex w-[147px] flex-col gap-[3px] border-r border-[#b0b0b0] pt-2 pl-[10px]">
          <div className="flex h-[21px] w-[129px] items-center justify-between font-bold">
            <span className="whitespace-nowrap">Bearish Harmonics</span>
            <button aria-label="Renommer">
              <Icon><rect x=".5" y="3.500" width="13" height="13" fill="#fff" stroke="#8ea0b0" /><path d="M5 9L13 1l4 3-8 8-5 2z" fill="#fbd040" stroke="#98701c" /></Icon>
            </button>
          </div>
          <Dropdown label="Trades" value="Tous les trades" className={`${box} w-[126px]`} />
        </div>
        <table className="mt-4 ml-[10px] self-start leading-[13px] whitespace-nowrap">
          <tbody>
            <tr>
              <th className="text-left font-normal">Début :</th>
              <td className="px-[5px] text-right">12 sept. 2019</td>
              <td className="font-bold">[10 000,00 $]</td>
            </tr>
            <tr>
              <th className="text-left font-normal">Actuel :</th>
              <td className="px-[5px] text-right">27 août 2025</td>
              <td className="font-bold">[11 706,56 $]</td>
            </tr>
          </tbody>
        </table>
      </div>
      <div className="grid grid-cols-[138fr_138fr_218fr_98fr_98fr] grid-rows-[78px_58px_58px_58px_58px_78px_98px_238px] gap-0.5 pt-px pl-px">
        <Tile title="Gain" className="col-span-2 bg-[#d3efd3]">
          <Figure value="1 706,56 $" className="pb-0.5 text-[34px] font-bold text-[#009600]" />
        </Tile>
        <Tile title="Gain moyen" className="row-span-5 bg-[#f7f7f7]">
          <p className="flex-1 pt-[11px] text-center text-[21px] leading-6 whitespace-nowrap">
            <span className="text-[#009600]">1 706,56 $</span> par trade
          </p>
          <AverageChart />
        </Tile>
        <Tile title="Runup max" className="col-span-2 bg-[#f7f7f7]">
          <Figure value="1 706,56 $" className="pb-0.5 text-[34px] text-[#009600]" />
        </Tile>
        <Tile title="% Trades gagnants" className="row-span-2 bg-[#f7f7f7]">
          <Ring value="100 %" className="fill-[#009600] text-[16px]" />
        </Tile>
        <Tile title="Ratio Gains/Pertes" className="row-span-2 bg-[#f7f7f7]">
          <Ring value="n/d" className="fill-black text-[21px]" />
        </Tile>
        <Tile title="Drawdown max" className="col-span-2 bg-[#f7f7f7]"><Figure value="-564,39 $" className="text-[17px] text-[#b01010]" /></Tile>
        <Tile title="Z-Score"><Figure value="(0 %) 0" /></Tile>
        <Tile title="Ratio de Sha..."><NoData /></Tile>
        <Tile title="Répartition des trades" className="col-span-2 row-span-2 bg-[#f7f7f7]">
          <table className="mt-[11px] mr-[34%] ml-auto text-right text-[15px] leading-[19px]">
            <tbody>
              {tradeCounts.map((count) => (
                <tr key={count.label} className={count.color}>
                  <th className="pr-1 font-normal">{count.label} :</th>
                  <td>{count.value}</td>
                </tr>
              ))}
            </tbody>
          </table>
        </Tile>
        <Tile title="CAGR"><Figure value="2,66 %" /></Tile>
        <Tile title="AHPR"><Figure value="17,07 %" /></Tile>
        <Tile title="Ecart type g..."><Figure value="0,00 $" /></Tile>
        <Tile title="Risk/Reward..."><NoData /></Tile>
        <Tile title="Durée moy des trades">
          <div className="mt-[14px] mr-[13px] ml-[9px] h-[30px] bg-[#3dd33d]" />
        </Tile>
        <section className="col-span-4 row-span-3 min-w-0 bg-[#f7f7f7]">
          <TileLabel title="Performance brute">
            <Dropdown label="Période" value="année" className="w-[50px] border-l border-[#aeaeae] pl-[3px]" />
          </TileLabel>
          <div className="pt-2 pr-1 pl-[9px]">
            <PerformanceChart />
          </div>
        </section>
        <Tile title="Temps dans le marché">
          <svg viewBox="0 0 120 62" className="mx-auto mt-[9px] block h-[62px] w-[120px]">
            <path d="M0 60A60 60 0 0 1 120 60H99A39 39 0 0 0 21 60z" fill="#efefef" />
            <path d="M0 57.500L21 59H0z" fill="#5a94f0" />
            <text x="60" y="57" textAnchor="middle" className="text-[16px]">1,83 %</text>
          </svg>
        </Tile>
        <Tile title="Moy ordres exec/jour"><Clock /></Tile>
      </div>
      <footer className="mt-5 h-[14px] border-t border-[#b0b0b0] bg-[#f4f4f4] pt-[3px] pl-[3px] leading-[11px] whitespace-nowrap">
        Les statistiques ci-dessus sont relatives au passé. Les performances passées ne présagent pas de l'avenir.
      </footer>
    </main>
  )
}

export default function App() {
  return (
    <div className="flex min-h-screen flex-col overflow-hidden bg-[#efefef] font-['Liberation_Sans',Arial,sans-serif] text-[11px] leading-[13px] text-black">
      <TopBar />
      <div className="grid grid-cols-[899fr_699fr]">
        <section className="min-w-0 border-r-2 border-l border-[#808080]">
          <ChartTitleBar />
          <EquityChart />
          <PriceChart />
          <BottomBar />
        </section>
        <Report />
      </div>
    </div>
  )
}
